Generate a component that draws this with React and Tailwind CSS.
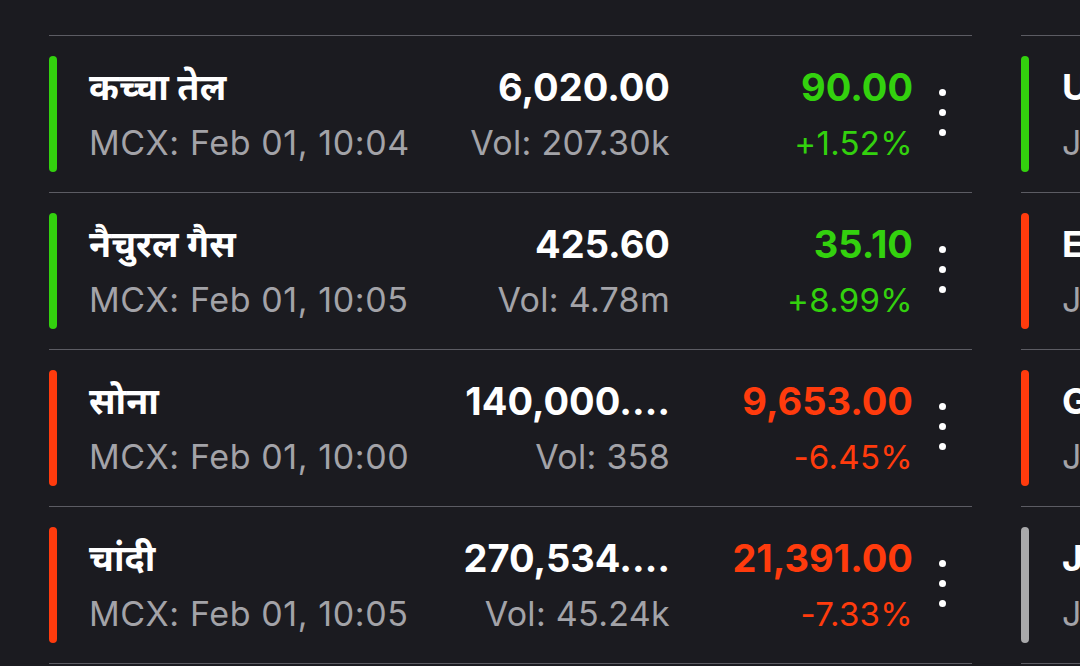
import React from 'react';

const rows = [
  { name: 'कच्चा तेल', time: 'MCX: Feb 01, 10:04', price: '6,020.00', vol: 'Vol: 207.30k', chg: '90.00', pct: '+1.52%', up: true },
  { name: 'नैचुरल गैस', time: 'MCX: Feb 01, 10:05', price: '425.60', vol: 'Vol: 4.78m', chg: '35.10', pct: '+8.99%', up: true },
  { name: 'सोना', time: 'MCX: Feb 01, 10:00', price: '140,000.…', vol: 'Vol: 358', chg: '9,653.00', pct: '-6.45%', up: false },
  { name: 'चांदी', time: 'MCX: Feb 01, 10:05', price: '270,534.…', vol: 'Vol: 45.24k', chg: '21,391.00', pct: '-7.33%', up: false },
];

const side = [
  { name: 'USDINR', time: 'Jan 30, 17:00', bar: 'bg-[#33d10e]' },
  { name: 'EURINR', time: 'Jan 30, 17:00', bar: 'bg-[#ff3b0d]' },
  { name: 'GBPINR', time: 'Jan 30, 17:00', bar: 'bg-[#ff3b0d]' },
  { name: 'JPYINR', time: 'Jan 30, 17:00', bar: 'bg-[#a9a9ab]' },
];

const font = { fontFamily: 'Inter, "Noto Sans", "Noto Sans Devanagari", sans-serif' };

function Dots() {
  return (
    <div className="-mt-[4px] flex w-[59px] flex-col items-center gap-[13px]">
      <span className="h-[7px] w-[7px] rounded-full bg-white" />
      <span className="h-[7px] w-[7px] rounded-full bg-white" />
      <span className="h-[7px] w-[7px] rounded-full bg-white" />
    </div>
  );
}

export default function App() {
  return (
    <div className="h-[666px] w-[1080px] overflow-hidden bg-[#1b1b20] pt-[35px]" style={font}>
      <div className="flex gap-[49px] pl-[49px]">
        {/* main list */}
        <div className="w-[923px] shrink-0">
          {rows.map((r) => (
            <div key={r.name} className="flex h-[157px] items-center border-t-[1.5px] border-[#5c5c63]">
              <div className={`h-[116px] w-[8px] rounded-full ${r.up ? 'bg-[#33d10e]' : 'bg-[#ff3b0d]'}`} />
              <div className="ml-[32px] flex min-w-0 flex-1 flex-col gap-[14px]">
                <div className="text-[36px] font-bold leading-[44px] text-white">{r.name}</div>
                <div className="text-[34px] leading-[40px] tracking-[0.6px] text-[#a3a3a8]">{r.time}</div>
              </div>
              <div className="flex w-[240px] flex-col items-end gap-[14px]">
                <div className="text-[38px] font-bold leading-[44px] text-white">{r.price}</div>
                <div className="text-[34px] leading-[40px] tracking-[0.3px] text-[#a3a3a8]">{r.vol}</div>
              </div>
              <div className={`ml-[23px] flex w-[220px] flex-col items-end gap-[14px] ${r.up ? 'text-[#33d10e]' : 'text-[#ff3b0d]'}`}>
                <div className="text-[38px] font-bold leading-[44px]">{r.chg}</div>
                <div className="text-[33px] leading-[40px] tracking-[0.3px]">{r.pct}</div>
              </div>
              <Dots />
            </div>
          ))}
          <div className="border-t-[1.5px] border-[#5c5c63]" />
        </div>

        {/* second column, cut by the screen edge */}
        <div className="w-[400px] shrink-0">
          {side.map((s) => (
            <div key={s.name} className="flex h-[157px] items-center border-t-[1.5px] border-[#5c5c63]">
              <div className={`h-[116px] w-[8px] rounded-full ${s.bar}`} />
              <div className="ml-[33px] flex flex-col gap-[14px] whitespace-nowrap">
                <div className="text-[36px] font-bold leading-[44px] text-white">{s.name}</div>
                <div className="text-[34px] leading-[40px] text-[#a3a3a8]">{s.time}</div>
              </div>
            </div>
          ))}
          <div className="border-t-[1.5px] border-[#5c5c63]" />
        </div>
      </div>
    </div>
  );
}
